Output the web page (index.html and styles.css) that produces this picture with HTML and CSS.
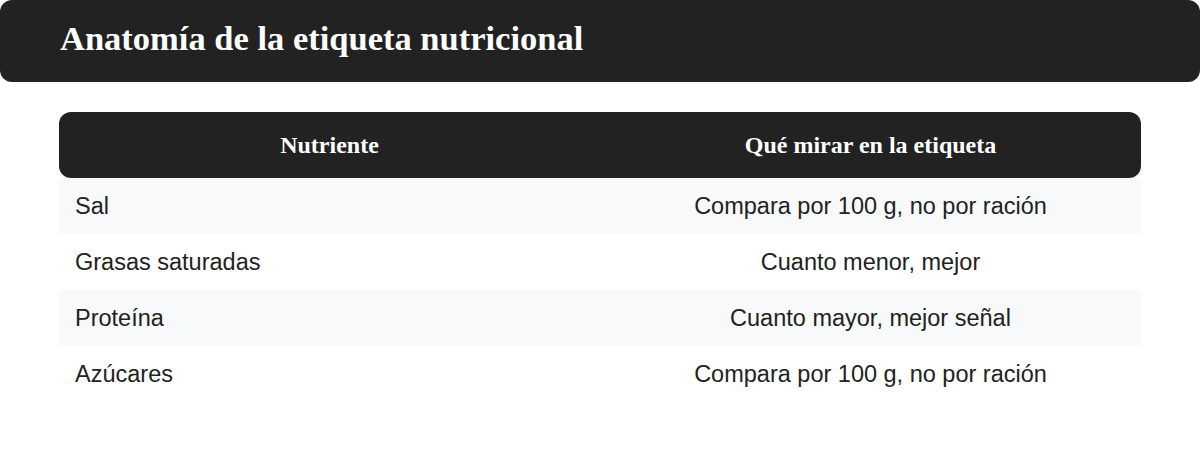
FILE: index.html
```html
<!DOCTYPE html>
<html lang="es">
<head>
<meta charset="utf-8">
<link rel="stylesheet" href="styles.css">
</head>
<body>
<header class="banner">
  <h1 class="title">Anatomía de la etiqueta nutricional</h1>
</header>
<main class="content">
  <table class="nutri">
    <thead>
      <tr><th>Nutriente</th><th>Qué mirar en la etiqueta</th></tr>
    </thead>
    <tbody>
      <tr class="alt"><td>Sal</td><td>Compara por 100 g, no por ración</td></tr>
      <tr><td>Grasas saturadas</td><td>Cuanto menor, mejor</td></tr>
      <tr class="alt"><td>Proteína</td><td>Cuanto mayor, mejor señal</td></tr>
      <tr><td>Azúcares</td><td>Compara por 100 g, no por ración</td></tr>
    </tbody>
  </table>
</main>
</body>
</html>
```
FILE: styles.css
```css
html, body { margin: 0; padding: 0; background: #fff; }
body { width: 1200px; height: 472px; overflow: hidden; }
.banner {
  background: #222;
  border-radius: 12px;
  height: 82px;
  display: flex;
  align-items: center;
  padding: 0 60px;
  box-sizing: border-box;
}
.title {
  margin: 0;
  color: #fff;
  font-family: "Liberation Serif", "Times New Roman", serif;
  font-weight: bold;
  font-size: 34.5px;
  line-height: 1;
  padding-bottom: 6px;
}
.content { padding: 30px 59px 0; }
.nutri {
  width: 100%;
  border-collapse: separate;
  border-spacing: 0;
  table-layout: fixed;
}
.nutri th {
  background: #222;
  color: #fff;
  font-family: "Liberation Serif", "Times New Roman", serif;
  font-weight: bold;
  font-size: 24px;
  height: 66px;
  padding: 0 16px;
  text-align: center;
}
.nutri th:first-child { border-radius: 12px 0 0 12px; }
.nutri th:last-child { border-radius: 0 12px 12px 0; }
.nutri td {
  font-family: "Liberation Sans", Arial, sans-serif;
  font-size: 23.5px;
  line-height: 28px;
  color: #222;
  height: 56px;
  padding: 0 16px;
}
.nutri td:first-child { text-align: left; }
.nutri td:last-child { text-align: center; }
.nutri tr.alt td { background: #f8f9fb; }
```
